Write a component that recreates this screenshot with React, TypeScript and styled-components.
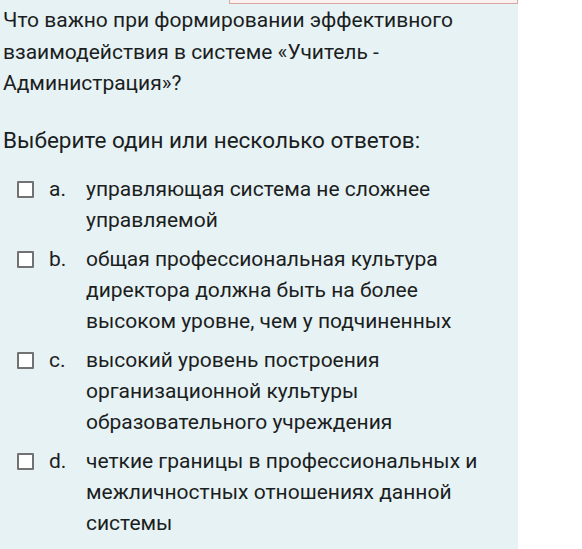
import styled, { createGlobalStyle } from 'styled-components'

const GlobalStyle = createGlobalStyle`
	html, body {
		margin: 0;
		padding: 0;
		background: #ffffff;
	}
	body {
		font-family: Roboto, 'Noto Sans', 'Liberation Sans', sans-serif;
		color: #1b1e21;
	}
`

const options = [
	{ letter: 'a.', lines: ['управляющая система не сложнее', 'управляемой'] },
	{
		letter: 'b.',
		lines: ['общая профессиональная культура', 'директора должна быть на более', 'высоком уровне, чем у подчиненных'],
	},
	{
		letter: 'c.',
		lines: ['высокий уровень построения', 'организационной культуры', 'образовательного учреждения'],
	},
	{
		letter: 'd.',
		lines: ['четкие границы в профессиональных и', 'межличностных отношениях данной', 'системы'],
	},
]

const App = () => {
	return (
		<>
			<GlobalStyle />
			<Page>
				<Panel>
					<FlagBox />
					<Question>
						Что важно при формировании эффективного
						<br />
						взаимодействия в системе «Учитель -
						<br />
						Администрация»?
					</Question>
					<Prompt>Выберите один или несколько ответов:</Prompt>
					<Answers>
						{options.map((o) => (
							<Answer key={o.letter}>
								<Check />
								<Letter>{o.letter}</Letter>
								<AnswerText>
									{o.lines.map((l, i) => (
										<span key={i}>
											{l}
											{i < o.lines.length - 1 && <br />}
										</span>
									))}
								</AnswerText>
							</Answer>
						))}
					</Answers>
				</Panel>
			</Page>
		</>
	)
}

const Page = styled.div`
	display: flex;
	width: 582px;
	height: 549px;
	overflow: hidden;
`

const Panel = styled.div`
	width: 518px;
	height: 549px;
	background-color: #e7f2f5;
	padding-left: 3px;
	box-sizing: border-box;
`

const FlagBox = styled.div`
	margin-left: 226px;
	width: 287px;
	height: 3px;
	background-color: #fbf1f1;
	border: 1px solid #d8a7a2;
	border-top: none;
	box-sizing: content-box;
`

const Question = styled.div`
	font-size: 21px;
	line-height: 31.5px;
	margin-top: 1px;
`

const Prompt = styled.div`
	font-size: 22.5px;
	line-height: 32px;
	margin-top: 24px;
`

const Answers = styled.div`
	display: flex;
	flex-direction: column;
	gap: 8px;
	margin-top: 18px;
`

const Answer = styled.div`
	display: flex;
	align-items: flex-start;
	font-size: 21px;
	line-height: 31px;
`

const Check = styled.span`
	flex: none;
	width: 13px;
	height: 13px;
	margin: 7px 0 0 14px;
	background: #ffffff;
	border: 2px solid #727272;
	border-radius: 1px;
`

const Letter = styled.span`
	flex: none;
	width: 37px;
	padding-left: 15px;
	box-sizing: content-box;
`

const AnswerText = styled.div``

export default App
